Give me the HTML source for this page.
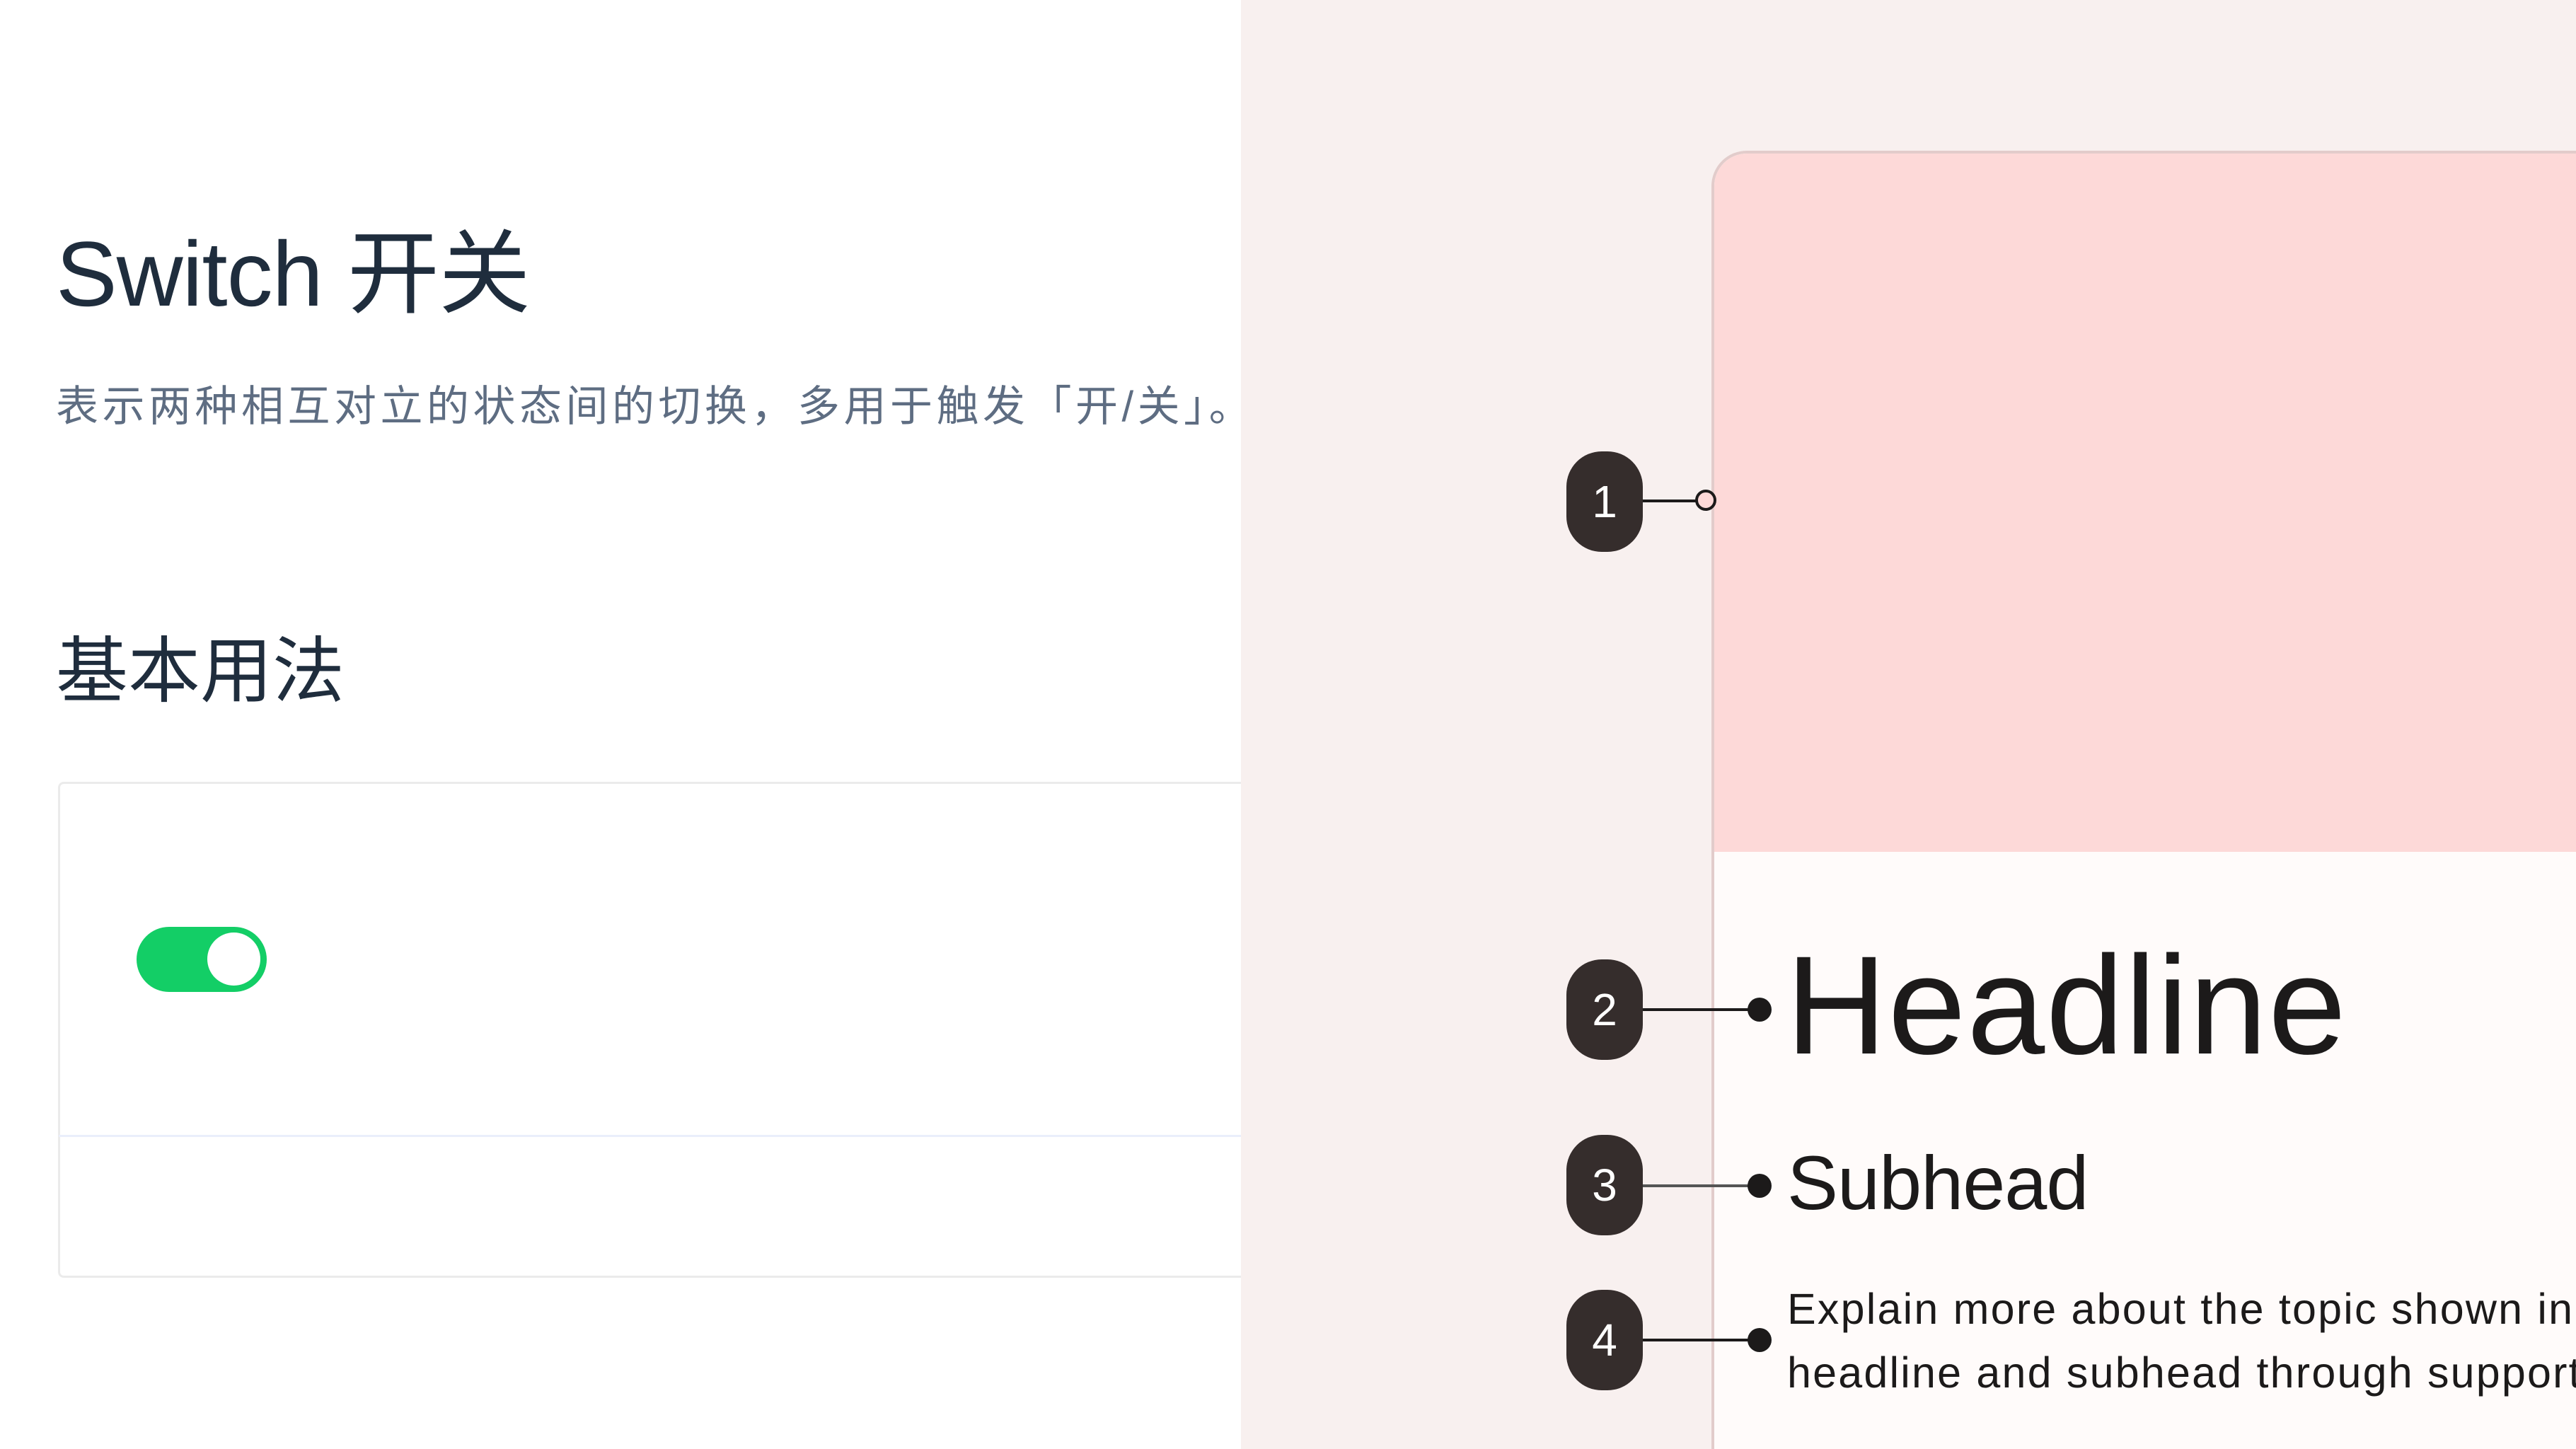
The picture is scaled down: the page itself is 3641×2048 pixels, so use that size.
<!DOCTYPE html>
<html><head><meta charset="utf-8"><style>
html,body{margin:0;padding:0;width:3641px;height:2048px;overflow:hidden;background:#f8f0ef;font-family:"Liberation Sans","Noto Sans CJK SC",sans-serif}
#root{position:relative;width:3641px;height:2048px;overflow:hidden;background:#f8f0ef}
.abs{position:absolute}
#left{left:0;top:0;width:1754px;height:2048px;background:#fff;overflow:hidden}
.badge{position:absolute;left:2214px;width:108px;height:142px;border-radius:50px;background:#352d2c;color:#fff;font-size:64px;line-height:142px;text-align:center}
.ln{position:absolute;left:2322px;height:4px;background:#1c1a1a}
.dot{position:absolute;width:34px;height:34px;border-radius:50%;background:#1c1a1a;left:2470px}
</style></head><body><div id="root">
<div id="left" class="abs">
  <div class="abs" style="left:79px;top:322px;font-size:130px;color:#1f2d3d;line-height:1;white-space:nowrap;letter-spacing:-1px">Switch 开关</div>
  <div class="abs" style="left:79px;top:545px;font-size:60px;color:#5e6d82;line-height:1;white-space:nowrap;letter-spacing:5.5px">表示两种相互对立的状态间的切换，多用于触发「开/关」。</div>
  <div class="abs" style="left:79px;top:898px;font-size:102px;color:#1f2d3d;line-height:1;white-space:nowrap">基本用法</div>
  <div class="abs" style="left:82px;top:1105px;width:1760px;height:701px;border:3px solid #ebebeb;border-radius:8px;box-sizing:border-box"></div>
  <div class="abs" style="left:83px;top:1604px;width:1700px;height:3px;background:#eaeefb"></div>
  <div class="abs" style="left:193px;top:1310px;width:184px;height:92px;border-radius:46px;background:#13ce66"></div>
  <div class="abs" style="left:293px;top:1318px;width:75px;height:75px;border-radius:50%;background:#fff"></div>
</div>
<div class="abs" style="left:2419px;top:213px;width:1222px;height:1835px;border-radius:50px 0 0 0;border-left:4px solid #e2cccb;border-top:4px solid #e2cccb;box-sizing:border-box;background:#fffbfa;overflow:hidden">
  <div style="height:987px;background:#fdd9d8"></div>
</div>
<div class="badge" style="top:638px">1</div>
<div class="ln" style="top:706px;width:76px"></div>
<div class="abs" style="left:2396px;top:692px;width:30px;height:30px;border-radius:50%;border:4px solid #1c1a1a;box-sizing:border-box;background:#fdd9d8"></div>
<div class="badge" style="top:1356px">2</div>
<div class="ln" style="top:1425px;width:160px"></div><div class="dot" style="top:1410px"></div>
<div class="badge" style="top:1604px">3</div>
<div class="ln" style="top:1674px;width:160px;background:#555"></div><div class="dot" style="top:1659px"></div>
<div class="badge" style="top:1823px">4</div>
<div class="ln" style="top:1892px;width:160px"></div><div class="dot" style="top:1877px"></div>
<div class="abs" style="left:2524px;top:1322px;font-size:198px;color:#1c1a1a;line-height:1;white-space:nowrap;letter-spacing:1.5px">Headline</div>
<div class="abs" style="left:2526px;top:1618px;font-size:108px;color:#1c1a1a;line-height:1;white-space:nowrap;letter-spacing:-1px">Subhead</div>
<div class="abs" style="left:2526px;top:1805px;font-size:61px;color:#1c1a1a;line-height:90px;white-space:nowrap;letter-spacing:2.2px">Explain more about the topic shown in the<br>headline and subhead through supporting text</div>
</div></body></html>
